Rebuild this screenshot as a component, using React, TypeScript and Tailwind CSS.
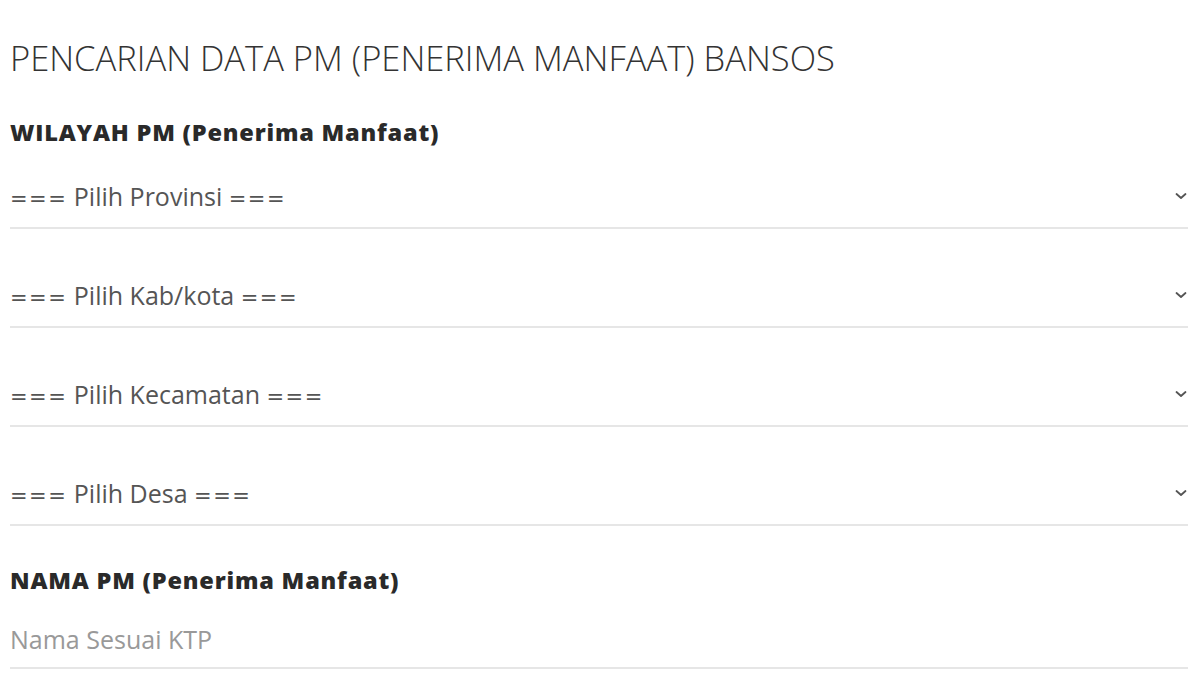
const Chevron = () => (
  <svg width="12" height="8" viewBox="0 0 12 8" fill="none" className="shrink-0">
    <path d="M1.5 2L6 6L10.5 2" stroke="#555" strokeWidth="1.8" strokeLinecap="round" strokeLinejoin="round" />
  </svg>
);

const Eq = () => <span className="font-['DejaVu_Sans'] text-[21px] tracking-[1.5px]">===</span>;

const SelectRow = ({ label }: { label: string }) => (
  <div className="flex h-[64px] items-center justify-between border-b-2 border-[#e6e6e6] pr-[1px]">
    <span className="pt-[2px] text-[25px] leading-[32px] text-[#555]">
      <Eq /> {label} <Eq />
    </span>
    <Chevron />
  </div>
);

export default function App() {
  const regions = ["Pilih Provinsi", "Pilih Kab/kota", "Pilih Kecamatan", "Pilih Desa"];

  return (
    <div
      className="min-h-screen bg-white pl-[10px] pr-[12px] pt-[37px]"
      style={{ fontFamily: '"Open Sans", "Liberation Sans", sans-serif' }}
    >
      <h1 className="text-[34.5px] font-[350] leading-[42px] text-[#333]">
        PENCARIAN DATA PM (PENERIMA MANFAAT) BANSOS
      </h1>

      <h2 className="mt-[38px] text-[23.5px] font-extrabold leading-[30px] tracking-[0.8px] text-[#2a2a2a]">
        WILAYAH PM (Penerima Manfaat)
      </h2>

      <div className="mt-[18px] flex flex-col gap-[35px]">
        {regions.map((r) => (
          <SelectRow key={r} label={r} />
        ))}
      </div>

      <h2 className="mt-[39px] text-[23.5px] font-extrabold leading-[30px] tracking-[0.8px] text-[#2a2a2a]">
        NAMA PM (Penerima Manfaat)
      </h2>

      <div className="mt-[14px] flex h-[60px] items-center border-b-2 border-[#e6e6e6]">
        <span className="pt-[2px] text-[25px] leading-[32px] text-[#999]">Nama Sesuai KTP</span>
      </div>
    </div>
  );
}
